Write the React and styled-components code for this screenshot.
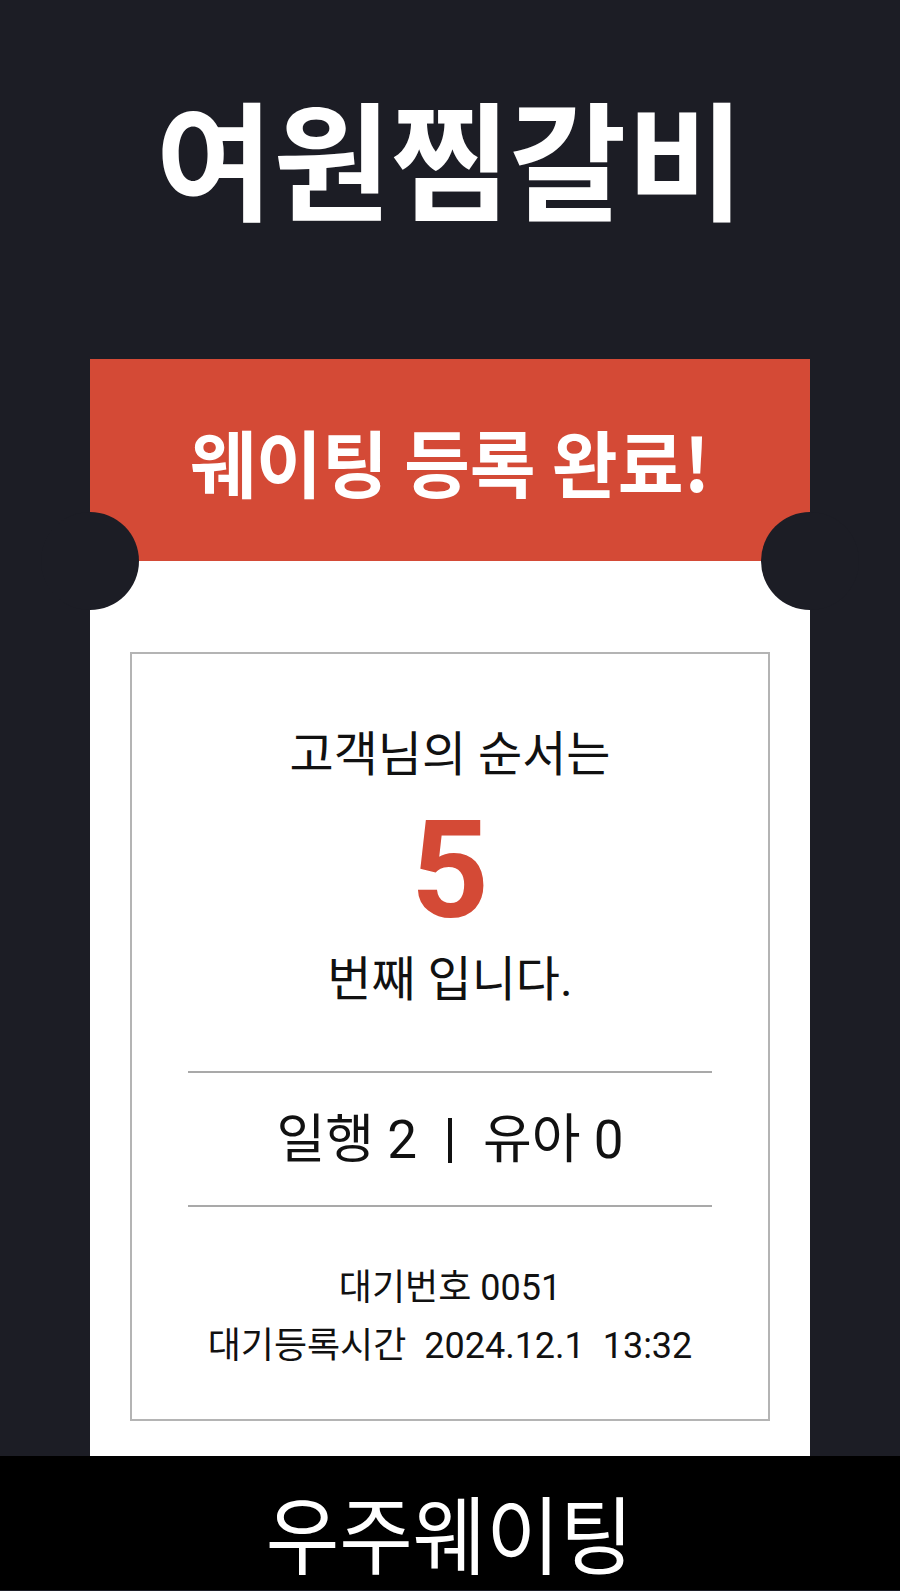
import React from "react";
import styled, { createGlobalStyle } from "styled-components";

const GlobalStyle = createGlobalStyle`
  html, body {
    margin: 0;
    padding: 0;
    background: #1c1d25;
  }
  body {
    font-family: Roboto, "Noto Sans CJK KR", "Noto Sans", sans-serif;
    color: #111;
  }
  * {
    box-sizing: border-box;
  }
`;

const Page = styled.div`
  width: 100%;
  min-height: 100vh;
  background: #1c1d25;
  display: flex;
  flex-direction: column;
`;

const StoreBar = styled.header`
  height: 359px;
  padding-bottom: 48px;
  display: flex;
  align-items: center;
  justify-content: center;
`;

const StoreName = styled.h1`
  margin: 0;
  color: #fff;
  font-family: "Noto Sans CJK KR", sans-serif;
  font-size: 128px;
  font-weight: 700;
  line-height: 1;
  white-space: nowrap;
`;

const Ticket = styled.section`
  margin: 0 90px;
  background: #fff;
  display: flex;
  flex-direction: column;
`;

const TicketHead = styled.div`
  position: relative;
  height: 202px;
  background: #d44a36;
  display: flex;
  align-items: center;
  justify-content: center;

  &::before,
  &::after {
    content: "";
    position: absolute;
    bottom: -49px;
    width: 98px;
    height: 98px;
    border-radius: 50%;
    background: #1c1d25;
    z-index: 1;
  }
  &::before {
    left: -49px;
  }
  &::after {
    right: -49px;
  }
`;

const HeadTitle = styled.h2`
  margin: 0;
  color: #fff;
  font-family: "Noto Sans CJK KR", sans-serif;
  font-size: 73px;
  font-weight: 700;
  line-height: 1;
  white-space: nowrap;
  transform: scaleX(0.98);
`;

const TicketBody = styled.div`
  padding: 91px 40px 35px;
`;

const InfoBox = styled.div`
  border: 2px solid #b4b4b4;
  padding: 73px 0 44px;
  display: flex;
  flex-direction: column;
  align-items: center;
  text-align: center;
`;

const Line = styled.p`
  margin: ${(p) => p.$top || 0}px 0 0;
  font-size: ${(p) => p.$size}px;
  line-height: ${(p) => p.$lh}px;
  color: #111;
  white-space: pre;
`;

const OrderNumber = styled.div`
  margin-top: 18px;
  font-family: Roboto, sans-serif;
  font-size: 136px;
  font-weight: 700;
  line-height: 140px;
  color: #d44a36;
`;

const Divider = styled.hr`
  align-self: stretch;
  margin: ${(p) => p.$top}px 56px 0;
  border: 0;
  height: 2px;
  background: #a9a9a9;
`;

const Bar = styled.span`
  display: inline-block;
  width: 4px;
  height: 45px;
  margin: 0 31px;
  background: #111;
  vertical-align: -5px;
`;

const Footer = styled.footer`
  height: 134px;
  padding-top: 14px;
  background: #000;
  display: flex;
  align-items: center;
  justify-content: center;
`;

const Brand = styled.div`
  color: #fff;
  font-family: "Noto Sans CJK KR", sans-serif;
  font-size: 85px;
  font-weight: 400;
  line-height: 1;
  white-space: nowrap;
  transform: scaleX(0.94);
`;

export default function App() {
  const ticket = {
    store: "여원찜갈비",
    order: 5,
    adults: 2,
    kids: 0,
    waitNo: "0051",
    date: "2024.12.1",
    time: "13:32"
  };

  return (
    <>
      <GlobalStyle />
      <Page>
        <StoreBar>
          <StoreName>{ticket.store}</StoreName>
        </StoreBar>
        <Ticket>
          <TicketHead>
            <HeadTitle>웨이팅 등록 완료!</HeadTitle>
          </TicketHead>
          <TicketBody>
            <InfoBox>
              <Line $size={48} $lh={56}>
                고객님의 순서는
              </Line>
              <OrderNumber>{ticket.order}</OrderNumber>
              <Line $size={48} $lh={56} $top={11}>
                번째 입니다.
              </Line>
              <Divider $top={63} />
              <Line $size={53} $lh={60} $top={37}>
                일행 {ticket.adults}
                <Bar />
                유아 {ticket.kids}
              </Line>
              <Divider $top={35} />
              <Line $size={36} $lh={58} $top={52}>
                대기번호 {ticket.waitNo}
              </Line>
              <Line $size={36} $lh={58}>
                {`대기등록시간  ${ticket.date}  ${ticket.time}`}
              </Line>
            </InfoBox>
          </TicketBody>
        </Ticket>
        <Footer>
          <Brand>우주웨이팅</Brand>
        </Footer>
      </Page>
    </>
  );
}
